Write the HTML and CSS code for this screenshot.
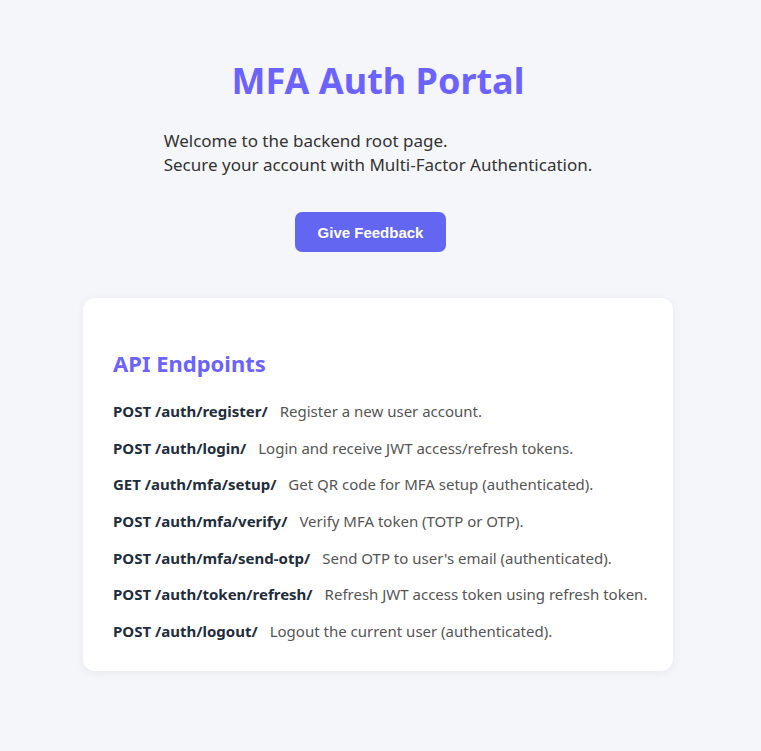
FILE: index.html
```html
<!DOCTYPE html>
<html lang="en">
<head>
<meta charset="utf-8">
<title>MFA Auth Portal</title>
<link rel="stylesheet" href="styles.css">
</head>
<body>
<main class="page">
  <h1 class="title">MFA Auth Portal</h1>
  <p class="intro">Welcome to the backend root page.<br>Secure your account with Multi-Factor Authentication.</p>
  <button class="btn" type="button">Give Feedback</button>
  <section class="card">
    <h2 class="card-title">API Endpoints</h2>
    <ul class="endpoints">
      <li><span class="ep">POST /auth/register/</span><span class="desc">Register a new user account.</span></li>
      <li><span class="ep">POST /auth/login/</span><span class="desc">Login and receive JWT access/refresh tokens.</span></li>
      <li><span class="ep">GET /auth/mfa/setup/</span><span class="desc">Get QR code for MFA setup (authenticated).</span></li>
      <li><span class="ep">POST /auth/mfa/verify/</span><span class="desc">Verify MFA token (TOTP or OTP).</span></li>
      <li><span class="ep">POST /auth/mfa/send-otp/</span><span class="desc">Send OTP to user's email (authenticated).</span></li>
      <li><span class="ep">POST /auth/token/refresh/</span><span class="desc">Refresh JWT access token using refresh token.</span></li>
      <li><span class="ep">POST /auth/logout/</span><span class="desc">Logout the current user (authenticated).</span></li>
    </ul>
  </section>
</main>
</body>
</html>
```
FILE: styles.css
```css
* { box-sizing: border-box; }
html, body { margin: 0; padding: 0; }
body {
  background: #f5f6fa;
  font-family: "Noto Sans", "Open Sans", sans-serif;
  color: #333;
  min-height: 751px;
}
.page {
  display: flex;
  flex-direction: column;
  align-items: center;
  padding-top: 57px;
  padding-right: 5px;
}
.title {
  margin: 0;
  font-size: 36px;
  line-height: 48px;
  font-weight: 700;
  color: #6c63ff;
}
.intro {
  margin: 24px 0 0;
  font-size: 17px;
  line-height: 24px;
  color: #333;
}
.btn {
  margin-top: 35px;
  margin-right: 15px;
  width: 151px;
  height: 40px;
  border: none;
  border-radius: 7px;
  background: #6366f1;
  color: #fff;
  font-family: "Liberation Sans", Arial, sans-serif;
  font-weight: 700;
  font-size: 15px;
}
.card {
  margin-top: 46px;
  width: 590px;
  background: #fff;
  border-radius: 12px;
  box-shadow: 0 2px 10px rgba(0,0,0,0.06);
  padding: 50px 30px 30px;
}
.card-title {
  margin: 0 0 23px;
  font-size: 22px;
  line-height: 30px;
  font-weight: 700;
  color: #6c63ff;
}
.endpoints {
  list-style: none;
  margin: 0;
  padding: 0;
}
.endpoints li {
  font-size: 15px;
  line-height: 20px;
  white-space: nowrap;
}
.endpoints li + li {
  margin-top: 16.7px;
}
.ep {
  font-weight: 700;
  color: #1f2d3d;
  margin-right: 12px;
}
.desc {
  color: #555;
}
```
